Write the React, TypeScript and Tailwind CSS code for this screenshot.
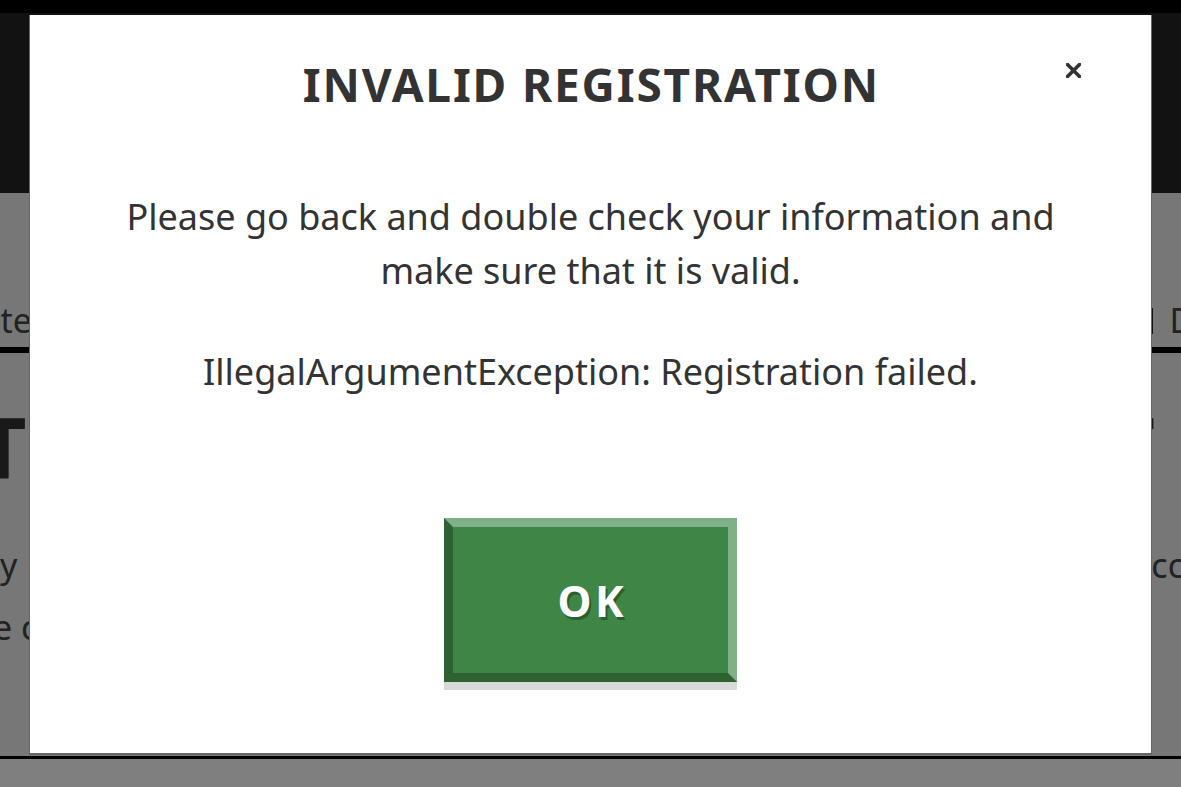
import React from "react";

export default function App() {
  return (
    <div className="relative h-[787px] overflow-hidden bg-white font-['Noto_Sans',sans-serif]">
      {/* Background page */}
      <div className="h-[13px] bg-black" />
      <div className="h-[180px] bg-[#242424]" />
      <div className="h-[563px] bg-[#eeeeee] flex flex-col">
        <div className="h-[154px] flex items-end justify-between pb-[10px] text-[34px] leading-none text-[#444]">
          <span className="ml-[-27px]">Site</span>
          <span className="flex items-end gap-[17px] mr-[-34px]">
            <span className="inline-block w-[4px] h-[26px] bg-[#222] mb-[3px]" />
            <span>Do</span>
          </span>
        </div>
        <div className="h-[6px] bg-black" />
        <div className="mt-[52px] flex justify-between text-[84px] leading-none font-bold text-[#333]">
          <span className="ml-[-22px]">T</span>
          <span className="mr-[26px]">T</span>
        </div>
        <div className="mt-[45px] flex justify-between text-[34px] leading-[62px] text-[#444]">
          <span className="ml-[0px]">y</span>
          <span className="mr-[-3px]">acc</span>
        </div>
        <div className="flex justify-between text-[34px] leading-[62px] text-[#444]">
          <span className="ml-[-7px]">e c</span>
          <span />
        </div>
      </div>
      <div className="h-[3px] bg-black" />

      {/* Overlay */}
      <div className="fixed inset-0 bg-black/50 flex justify-center pt-[15px]">
        <div className="relative w-[1123px] h-[740px] bg-white border-x border-b-2 border-[#666] flex flex-col items-center text-[#333]">
          <h1 className="pt-[41px] text-[46px] leading-[56px] font-bold tracking-[0.04em] pl-[0.04em] text-[#333]">
            INVALID REGISTRATION
          </h1>
          <button
            type="button"
            className="absolute left-[1036px] top-[48px] w-[15px] h-[15px]"
            aria-label="Close"
          >
            <svg width="15" height="15" viewBox="0 0 15 15">
              <path d="M1.5 1.5 L13.5 13.5 M13.5 1.5 L1.5 13.5" stroke="#333" strokeWidth="3.6" strokeLinecap="square" fill="none" />
            </svg>
          </button>
          <p className="mt-[78px] w-[980px] text-center text-[36px] leading-[54px] text-[#333]">
            Please go back and double check your information and make sure that it is valid.
          </p>
          <p className="mt-[47px] text-center text-[36px] leading-[54px] text-[#333]">
            IllegalArgumentException: Registration failed.
          </p>
          <button
            type="button"
            className="mt-[119px] w-[293px] h-[164px] flex items-center justify-center bg-[#3e8546] border-[9px] border-t-[#80b088] border-r-[#80b088] border-l-[#2e6233] border-b-[#2e6233] shadow-[0_8px_0_#d9d9d9]"
          >
            <span className="text-[43px] leading-none font-bold tracking-[0.08em] pl-[0.08em] text-white [text-shadow:2px_3px_0_#2b5e2f]">
              OK
            </span>
          </button>
        </div>
      </div>
    </div>
  );
}
